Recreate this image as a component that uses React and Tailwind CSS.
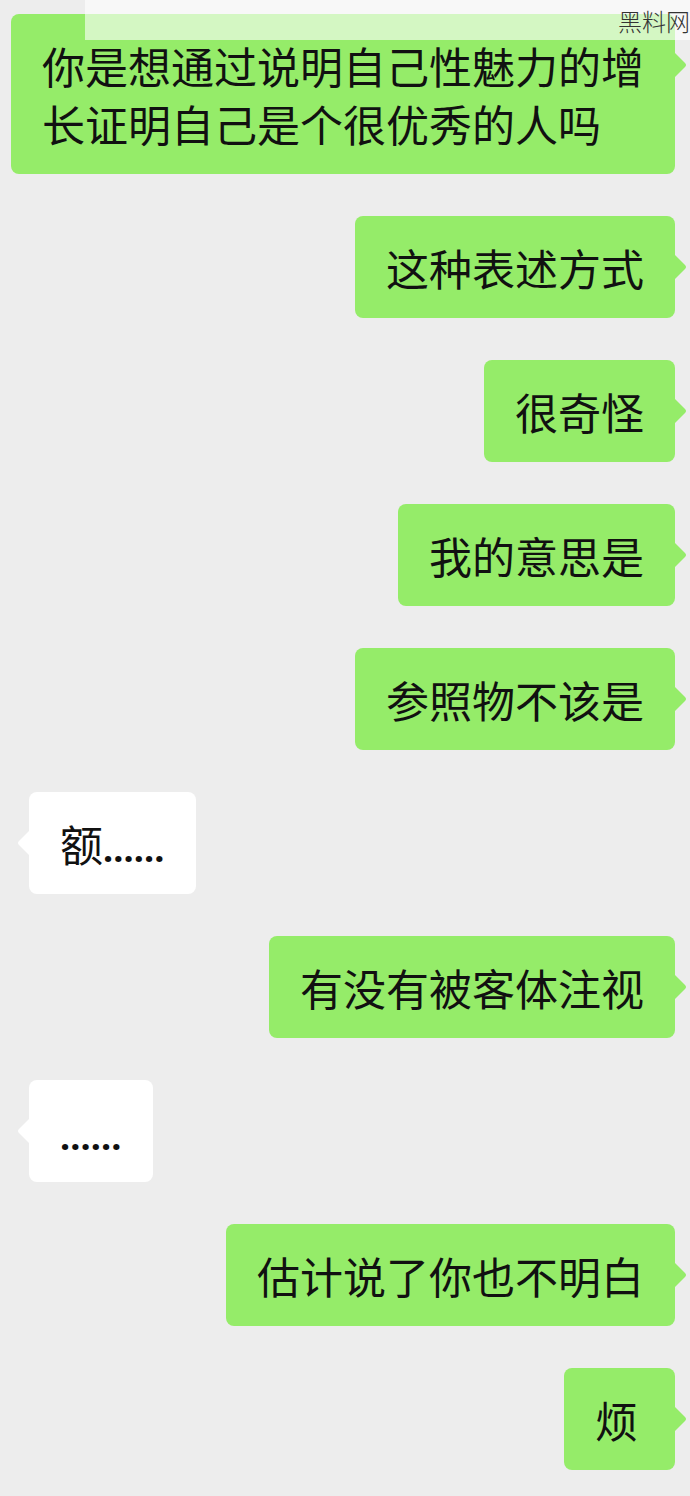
import React from 'react';

const messages = [
  { id: 1, side: 'right', lines: ['你是想通过说明自己性魅力的增', '长证明自己是个很优秀的人吗'] },
  { id: 2, side: 'right', lines: ['这种表述方式'] },
  { id: 3, side: 'right', lines: ['很奇怪'] },
  { id: 4, side: 'right', lines: ['我的意思是'] },
  { id: 5, side: 'right', lines: ['参照物不该是'] },
  { id: 6, side: 'left', lines: ['额'], dots: true },
  { id: 7, side: 'right', lines: ['有没有被客体注视'] },
  { id: 8, side: 'left', lines: [''], dots: true },
  { id: 9, side: 'right', lines: ['估计说了你也不明白'] },
  { id: 10, side: 'right', lines: ['烦'] },
];

const Bubble = ({ side, lines, dots }) => {
  const mine = side === 'right';
  return (
    <div className={mine ? 'flex justify-end pr-[15px]' : 'flex justify-start pl-[29px]'}>
      <div
        className={`relative min-w-[111px] rounded-[8px] px-[31px] py-[22px] text-[43px] leading-[58px] text-[#111] whitespace-nowrap ${
          mine ? 'bg-[#95ec69]' : 'bg-white'
        }`}
      >
        {lines.map((l, i) => (
          <div key={i} className="h-[58px]">
            {l}
            {dots && (
              <span className="font-['Noto_Sans'] font-bold text-[36px] leading-none">……</span>
            )}
          </div>
        ))}
        {/* tail */}
        {mine ? (
          <svg className="absolute top-[38px] right-[-12px]" width="13" height="26" viewBox="0 0 13 26">
            <path d="M0 0 L11 11 Q13 13 11 15 L0 26 Z" fill="#95ec69" />
          </svg>
        ) : (
          <svg className="absolute top-[38px] left-[-12px]" width="13" height="26" viewBox="0 0 13 26">
            <path d="M13 0 L2 11 Q0 13 2 15 L13 26 Z" fill="#ffffff" />
          </svg>
        )}
      </div>
    </div>
  );
};

export default function App() {
  return (
    <div
      className="relative min-h-[1496px] w-[690px] overflow-hidden bg-[#ededed] pt-[14px]"
      style={{ fontFamily: '"Noto Sans CJK SC", "Noto Sans", sans-serif' }}
    >
      <div className="flex flex-col gap-[42px]">
        {messages.map((m) => (
          <Bubble key={m.id} side={m.side} lines={m.lines} dots={m.dots} />
        ))}
      </div>

      {/* translucent top bar + watermark */}
      <div className="absolute top-0 left-[85px] right-0 h-[40px] bg-white/60" />
      <div className="absolute top-[5px] right-0 text-[24px] leading-[32px] font-light text-[#333]">
        黑料网
      </div>
    </div>
  );
}
